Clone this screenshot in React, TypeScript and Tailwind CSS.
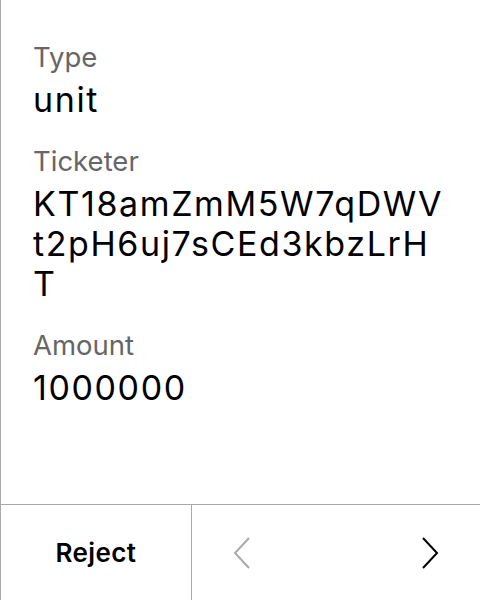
import React from 'react';

const Field: React.FC<{ label: string; value: string }> = ({ label, value }) => (
  <div className="mb-[24px]">
    <div className="text-[27.5px] leading-[34px] text-[#666666]">{label}</div>
    <div className="mt-[6px] text-[34px] leading-[40px] tracking-[1.6px] text-black break-all">
      {value}
    </div>
  </div>
);

const App: React.FC = () => {
  return (
    <div
      className="w-[480px] h-[600px] bg-white border-l border-[#aaaaaa] flex flex-col"
      style={{ fontFamily: 'Inter, "Noto Sans", sans-serif' }}
    >
      {/* Details */}
      <div className="flex-1 pl-8 pr-[34px] pt-[40px]">
        <Field label="Type" value="unit" />
        <Field label="Ticketer" value="KT18amZmM5W7qDWVt2pH6uj7sCEd3kbzLrHT" />
        <Field label="Amount" value="1000000" />
      </div>

      {/* Footer */}
      <div className="h-[96px] border-t border-[#aaaaaa] flex">
        <button className="w-[191px] border-r border-[#aaaaaa] flex items-center justify-center text-[26px] font-semibold tracking-[0.4px] text-black">
          Reject
        </button>
        <div className="flex-1 flex items-center justify-between">
          <button className="w-[100px] h-full flex items-center justify-center">
            <svg width="18" height="32" viewBox="0 0 18 32" fill="none">
              <path d="M16 1 L2 16 L16 31" stroke="#aaaaaa" strokeWidth="2" />
            </svg>
          </button>
          <button className="w-[100px] h-full flex items-center justify-center">
            <svg width="18" height="32" viewBox="0 0 18 32" fill="none">
              <path d="M2 1 L16 16 L2 31" stroke="#000000" strokeWidth="2" />
            </svg>
          </button>
        </div>
      </div>
    </div>
  );
};

export default App;
